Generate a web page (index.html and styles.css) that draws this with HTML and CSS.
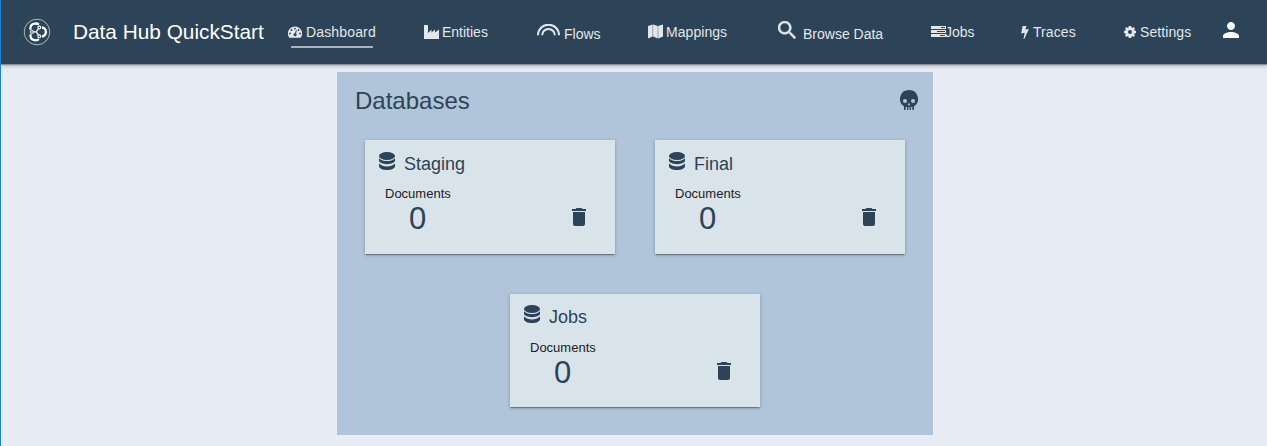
FILE: index.html
```html
<!DOCTYPE html>
<html lang="en">
<head>
<meta charset="utf-8">
<title>Data Hub QuickStart</title>
<link rel="stylesheet" href="styles.css">
</head>
<body>
<svg class="defs" width="0" height="0" aria-hidden="true">
  <symbol id="database" viewBox="0 0 16 18">
    <ellipse cx="8" cy="4" rx="8" ry="4"/>
    <path d="M0 6.2C2 8.3 5 9 8 9s6-.7 8-2.8v2.4c0 2-3.6 3.6-8 3.6S0 10.600 0 8.600zM0 11.600c2 2.100 5 2.800 8 2.800s6-.7 8-2.800v2.600c0 2.100-3.600 3.800-8 3.800s-8-1.700-8-3.800z"/>
  </symbol>
  <symbol id="trash" viewBox="5 3 14 18">
    <path d="M6 19c0 1.100.9 2 2 2h8c1.100 0 2-.9 2-2V7H6v12zM19 4h-3.500l-1-1h-5l-1 1H5v2h14V4z"/>
  </symbol>
</svg>
<header class="topbar">
  <svg class="logo" viewBox="0 0 28 28">
    <circle cx="14" cy="14" r="12.800" fill="none" stroke="#b9c4cc" stroke-width=".9"/>
    <g fill="none" stroke="#fff">
      <path stroke-width="2.300" d="M7.900 11.600C6.400 8.800 8.600 5.700 11.300 5.600c1.700-.3 3.200-.2 4.600 1M7.900 16.200c-1.500 2.800.7 5.900 3.400 6 1.700.3 3.200.2 4.600-1M18.900 9.500c2.200-.2 4 1.900 4 4.400s-1.800 4.600-4 4.400"/>
      <path stroke-width="1.200" d="M10.300 13.900h2.900l2.300-3.200M13.200 13.900l2.300 3.200"/>
      <g stroke-width="1.100"><circle cx="8.900" cy="13.900" r="1.400"/><circle cx="16.300" cy="9.500" r="1.400"/><circle cx="16.300" cy="18.300" r="1.400"/></g>
    </g>
  </svg>
  <h1 class="brand">Data Hub QuickStart</h1>
  <nav class="nav">
    <a class="item active"><svg width="14" height="12" viewBox="0 0 14 12"><path fill-rule="evenodd" d="M7 .5a7 7 0 0 1 6 10.700q-.3.500-.8.500H1.800q-.5 0-.8-.5A7 7 0 0 1 7 .5zM7 1.700a.9.900 0 1 0 0 1.800.9.900 0 0 0 0-1.800zM3.500 3.100a.9.900 0 1 0 0 1.800.9.900 0 0 0 0-1.800zM2 6.600a.9.900 0 1 0 0 1.800.9.900 0 0 0 0-1.800zM12 6.600a.9.900 0 1 0 0 1.800.9.900 0 0 0 0-1.800zM10.500 3.100a.9.900 0 1 0 0 1.800.9.900 0 0 0 0-1.800zM7.900 4.300L7 7.200a1.500 1.500 0 1 0 1 .3l.9-2.900z"/></svg><span>Dashboard</span></a>
    <a class="item entities"><svg width="15" height="14" viewBox="0 0 15 14"><path d="M0 0h4v8l3.500-3.500v3L11 4.500v3l4-3V14H0z"/></svg><span>Entities</span></a>
    <a class="item flows"><svg width="23" height="12" viewBox="0 0 23 12"><path fill="none" stroke="#e3e7ea" stroke-width="2" d="M1 11.200a10.500 10.500 0 0 1 21 0M5.200 11.200a6.300 6.300 0 0 1 12.600 0"/></svg><span>Flows</span></a>
    <a class="item mappings"><svg width="15" height="15" viewBox="0 0 15 15"><path d="M0 2L4.700.5v12L0 14.500zM5.100.5L9.800 2v12.500l-4.700-2zM10.200 2L15 .5v12l-4.800 2z"/></svg><span>Mappings</span></a>
    <a class="item browse"><svg width="18" height="18" viewBox="3 3 17.500 17.500"><path stroke="currentColor" stroke-width=".4" d="M15.500 14h-.79l-.28-.27A6.500 6.500 0 1 0 13.730 14.430l.27.28v.79l5 4.990L20.490 19zm-6 0a4.500 4.500 0 1 1 0-9 4.500 4.500 0 0 1 0 9z"/></svg><span>Browse Data</span></a>
    <a class="item jobs"><svg width="15" height="11" viewBox="0 0 15 11"><path fill-rule="evenodd" d="M0 0h15v3H0zM10 1v1h4V1zM0 4h15v3H0zM6 5v1h8V5zM0 8h15v3H0zM9 9v1h5V9z"/></svg><span>Jobs</span></a>
    <a class="item traces"><svg width="8" height="13" viewBox="0 0 8 13"><path d="M1.600 0h4L4.300 3.600 7.900 3 3.200 13h-.7L3.700 6.800.2 7.500z"/></svg><span>Traces</span></a>
    <a class="item settings"><svg width="12" height="12" viewBox="0 0 12 12"><path fill-rule="evenodd" d="M4.800 0h2.400l.4 1.600.6.300L9.600 1 11 2.400l-.9 1.400.3.600 1.600.4v2.400l-1.600.4-.3.600.9 1.400L9.600 11l-1.400-.9-.6.300-.4 1.600H4.800l-.4-1.600-.6-.3-1.400.9L1 9.600l.9-1.400-.3-.6L0 7.200V4.800l1.600-.4.3-.6L1 2.400 2.400 1l1.400.9.600-.3zM6 4a2 2 0 1 0 0 4 2 2 0 0 0 0-4z"/></svg><span>Settings</span></a>
    <a class="item user"><svg width="16" height="16" viewBox="4 4 16 16"><path fill="#fff" d="M12 12c2.210 0 4-1.790 4-4s-1.790-4-4-4-4 1.790-4 4 1.790 4 4 4zm0 2c-2.670 0-8 1.340-8 4v2h16v-2c0-2.660-5.330-4-8-4z"/></svg></a>
  </nav>
</header>
<main class="panel">
  <div class="panel-head">
    <h2>Databases</h2>
    <svg class="skull" width="18" height="20" viewBox="0 0 18 20"><path fill-rule="evenodd" d="M9 0a9 9 0 0 1 5 16.500V20h-1.600v-3h-1.500v3H9.600v-3H8.400v3H7.100v-3H5.600v3H4v-3.500A9 9 0 0 1 9 0zM5 9a2 2 0 1 0 0 4 2 2 0 0 0 0-4zM13 9a2 2 0 1 0 0 4 2 2 0 0 0 0-4zM9 12.800L7.700 15.200h2.600z"/></svg>
  </div>
  <div class="cards">
    <section class="card">
      <h3><svg class="db"><use href="#database"/></svg>Staging</h3>
      <div class="label">Documents</div>
      <div class="row"><span class="count">0</span><svg class="trash"><use href="#trash"/></svg></div>
    </section>
    <section class="card">
      <h3><svg class="db"><use href="#database"/></svg>Final</h3>
      <div class="label">Documents</div>
      <div class="row"><span class="count">0</span><svg class="trash"><use href="#trash"/></svg></div>
    </section>
    <section class="card last">
      <h3><svg class="db"><use href="#database"/></svg>Jobs</h3>
      <div class="label">Documents</div>
      <div class="row"><span class="count">0</span><svg class="trash"><use href="#trash"/></svg></div>
    </section>
  </div>
</main>
</body>
</html>
```
FILE: styles.css
```css
* { box-sizing: border-box; }
body {
  margin: 0;
  height: 446px;
  overflow: hidden;
  border-left: 1px solid #1a82d8;
  background: #e8edf5;
  color: #2c4358;
  font-family: "Liberation Sans", Arial, sans-serif;
}
h1, h2, h3 { margin: 0; font-weight: 400; }
svg { display: block; flex: none; fill: currentColor; }
.defs { display: none; }
.topbar {
  display: flex;
  height: 64px;
  padding-left: 22px;
  background: #2c4358;
  box-shadow: 0 1px 1px #8d9194, 0 2px 4px rgba(0, 0, 0, .25);
}
.logo { width: 28px; height: 28px; margin-top: 18px; }
.brand {
  width: 215px;
  margin-left: 22px;
  font-size: 20.8px;
  line-height: 64px;
  color: #fff;
  white-space: nowrap;
}
.nav {
  display: grid;
  grid-template-columns: 136px 113px 111px 130px 153px 90px 103px 99px 16px;
}
.item {
  display: flex;
  align-items: flex-start;
  gap: 4px;
  height: 64px;
  padding-top: 24px;
  font-size: 14px;
  line-height: 16px;
  color: #e3e7ea;
  white-space: nowrap;
}
.item svg { margin-top: 2px; }
.active {
  width: 88px;
  letter-spacing: .15px;
  background: linear-gradient(#a7b4bb, #a7b4bb) 3px 46px / 82px 2px no-repeat;
}
.entities svg { margin-top: 1px; }
.entities { gap: 3px; }
.flows { padding-top: 26px; }
.flows svg { margin-top: -2px; }
.mappings svg { margin-top: 0; }
.mappings { gap: 3px; letter-spacing: .06px; }
.browse { padding-top: 26px; gap: 7px; }
.browse svg { margin-top: -5px; }
.jobs { gap: 0; margin-right: 0; }
.jobs span { margin-left: -1px; }
.traces, .settings { letter-spacing: .08px; }
.user svg { margin-top: -2px; }
.panel {
  width: 596px;
  height: 363px;
  margin: 8px 0 0 336px;
  padding: 0 28px;
  background: #b0c5d9;
}
.panel-head {
  display: flex;
  justify-content: space-between;
  height: 68px;
  margin: 0 -13px 0 -10px;
}
.panel-head h2 { font-size: 24px; line-height: 58px; }
.skull { margin-top: 18px; }
.cards {
  display: grid;
  grid-template-columns: 250px 250px;
  grid-template-rows: 114px 113px;
  gap: 40px;
}
.card {
  width: 250px;
  padding: 12px 14px 0;
  background: #d9e3ea;
  box-shadow: 0 2px 1px -1px rgba(0, 0, 0, .2), 0 1px 1px rgba(0, 0, 0, .14), 0 1px 4px rgba(0, 0, 0, .2);
}
.last { grid-column: 1 / 3; justify-self: center; padding-top: 11px; }
.card h3 { display: flex; gap: 9px; font-size: 18px; line-height: 24px; }
.db { width: 16px; height: 18px; }
.label { margin: 10px 0 0 6px; font-size: 13px; line-height: 16px; color: #1c2026; }
.last .label { margin-top: 11px; }
.row { display: flex; justify-content: space-between; padding: 0 15px 0 30px; }
.count { font-size: 31px; line-height: 33px; }
.trash { width: 14px; height: 18px; margin-top: 6px; }
```
